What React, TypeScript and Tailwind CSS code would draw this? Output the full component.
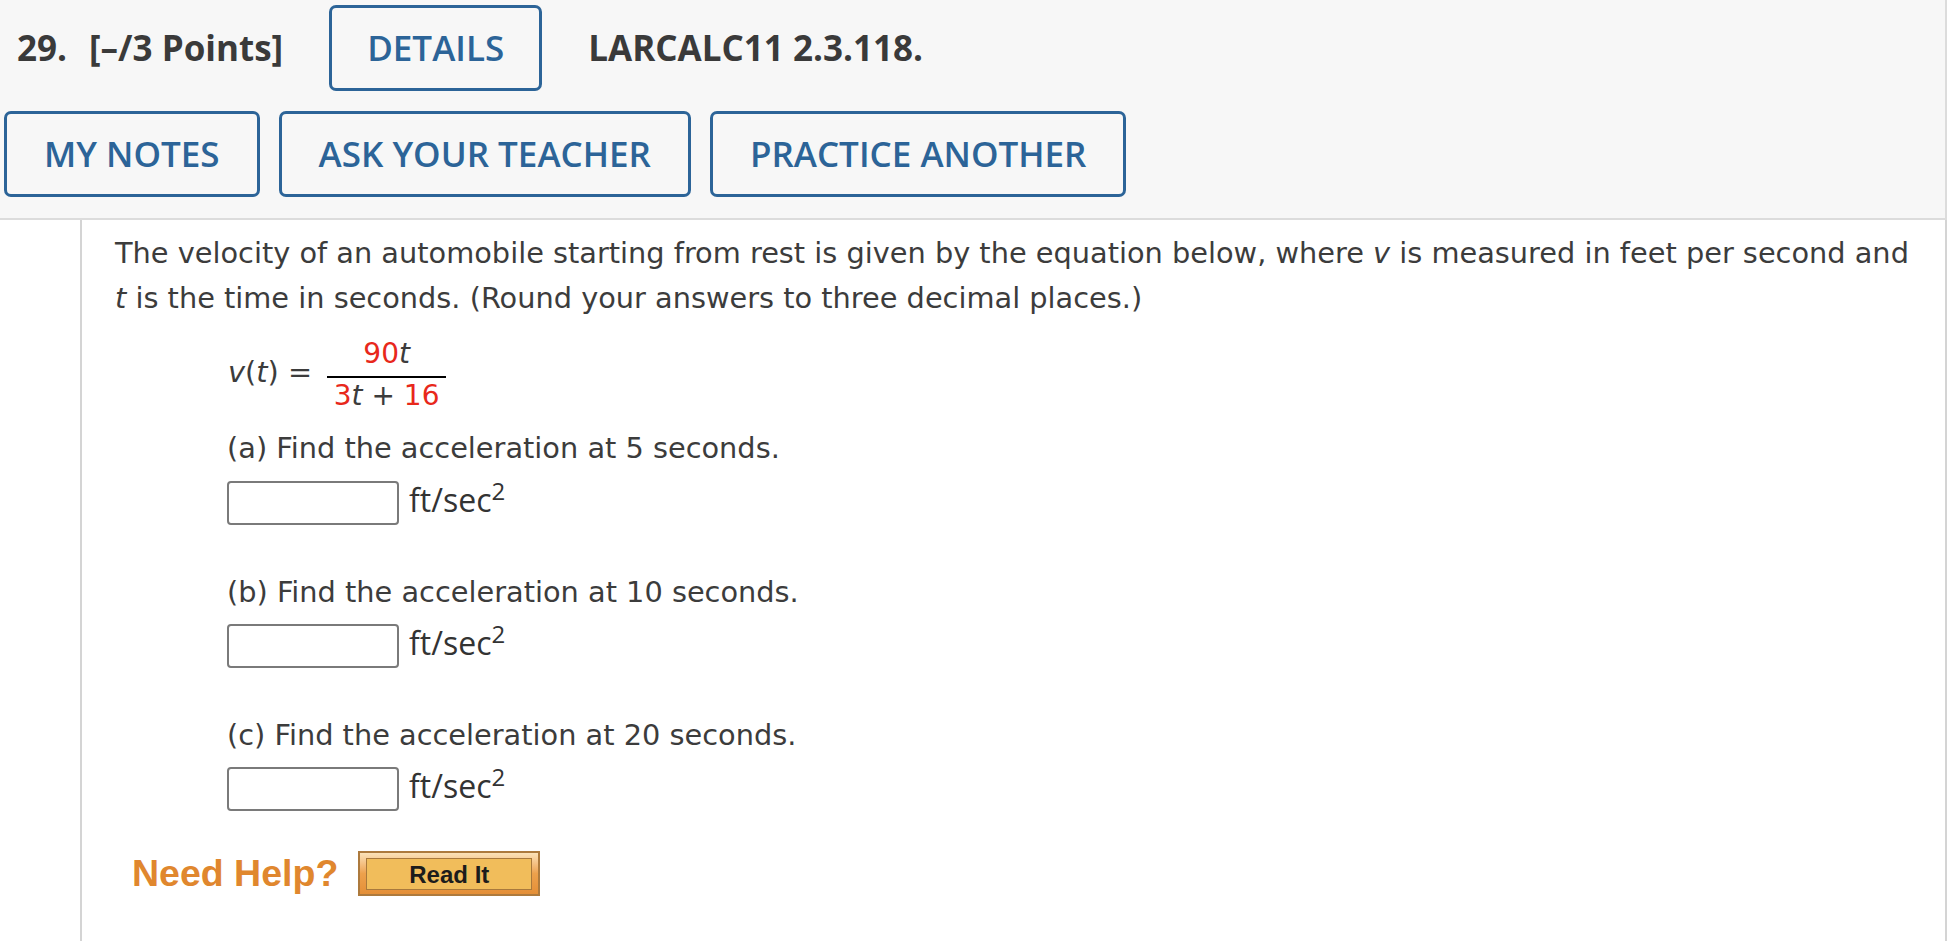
const blueBtn =
  "flex h-[86px] items-center rounded-[7px] border-[3px] border-[#2c6498] bg-[#f7f7f7] font-['Open_Sans'] text-[35px] font-semibold text-[#2c6498]";

function AnswerRow() {
  return (
    <div className="flex items-center">
      <div className="h-[44px] w-[172px] rounded-[4px] border-2 border-[#7a7a7a] bg-white" />
      <span className="mb-[5px] ml-[10px] font-['Open_Sans'] text-[32px] leading-[44px] text-[#333]">
        ft/sec<sup>2</sup>
      </span>
    </div>
  );
}

export default function App() {
  return (
    <div className="min-h-[941px] w-[1951px] bg-white">
      {/* question header */}
      <div className="mr-[4px] border-b-2 border-r-2 border-[#dcdcdc] bg-[#f7f7f7] pb-[21px] pt-[5px]">
        <div className="flex h-[86px] items-center font-['Open_Sans'] text-[35px] font-bold text-[#3a3a3a]">
          <span className="ml-[17px]">29.</span>
          <span className="ml-[22px]">[–/3 Points]</span>
          <button className={`${blueBtn} ml-[46px] px-[35px]`}>DETAILS</button>
          <span className="ml-[46px]">LARCALC11 2.3.118.</span>
        </div>
        <div className="ml-[4px] mt-[20px] flex gap-[19px]">
          <button className={`${blueBtn} px-[37px]`}>MY NOTES</button>
          <button className={`${blueBtn} px-[37px]`}>ASK YOUR TEACHER</button>
          <button className={`${blueBtn} px-[37px]`}>PRACTICE ANOTHER</button>
        </div>
      </div>

      {/* question body */}
      <div className="ml-[80px] mr-[4px] min-h-[721px] border-l-2 border-r-2 border-[#d4d4d4] pl-[33px] pt-[11px] font-['DejaVu_Sans'] text-[28.8px] leading-[45px] text-[#3c3c3c]">
        <p>
          The velocity of an automobile starting from rest is given by the equation below, where{" "}
          <i>v</i> is measured in feet per second and
          <br />
          <i>t</i> is the time in seconds. (Round your answers to three decimal places.)
        </p>

        <div className="ml-[113px] mt-[16px] flex items-center">
          <span className="mb-[6px]">
            <i>v</i>(<i>t</i>) =
          </span>
          <div className="ml-[15px] flex flex-col items-center text-[28px] leading-[34px]">
            <span className="mb-[5px]">
              <span className="text-[#e8281b]">90</span>
              <i>t</i>
            </span>
            <div className="h-[2px] w-[119px] bg-black" />
            <span className="mt-[1px]">
              <span className="text-[#e8281b]">3</span>
              <i>t</i> + <span className="text-[#e8281b]">16</span>
            </span>
          </div>
        </div>

        <div className="ml-[112px]">
          <p className="mt-[13px]">(a) Find the acceleration at 5 seconds.</p>
          <div className="mt-[7px]">
            <AnswerRow />
          </div>

          <p className="mt-[43px]">(b) Find the acceleration at 10 seconds.</p>
          <div className="mt-[6px]">
            <AnswerRow />
          </div>

          <p className="mt-[43px]">(c) Find the acceleration at 20 seconds.</p>
          <div className="mt-[6px]">
            <AnswerRow />
          </div>
        </div>

        <div className="ml-[17px] mt-[38px] flex items-center">
          <span className="font-['Liberation_Sans'] text-[37.5px] font-bold leading-[45px] text-[#e0872e]">
            Need Help?
          </span>
          <div className="ml-[20px] h-[45px] w-[182px] border-2 border-[#ad7a3d] bg-linear-to-b from-[#fbe2b8] via-[#eda14c] to-[#e48f37] px-[6px] pb-[4px] pt-[5px]">
            <div className="flex h-full items-center justify-center border border-[#a9793c] bg-[#f1bd5b] font-['Liberation_Sans'] text-[24px] font-bold text-[#1c1c1c]">
              Read It
            </div>
          </div>
        </div>
      </div>
    </div>
  );
}
